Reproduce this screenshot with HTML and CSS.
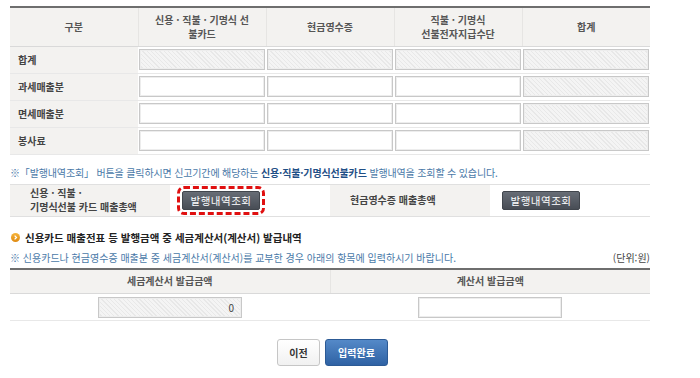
FILE: index.html
```html
<!DOCTYPE html>
<html lang="ko">
<head>
    <meta charset="UTF-8">
    <meta name="viewport" content="width=device-width, initial-scale=1.0">
    <title>신용카드 매출전표 등 발행금액</title>
    <link rel="stylesheet" href="styles.css">
</head>
<body>
    <div class="wrap">
        <table class="grid sales">
            <thead>
                <tr>
                    <th>구분</th>
                    <th>신용 · 직불 · 기명식 선<br>불카드</th>
                    <th>현금영수증</th>
                    <th>직불 · 기명식<br>선불전자지급수단</th>
                    <th>합계</th>
                </tr>
            </thead>
            <tbody>
                <tr>
                    <td class="label">합계</td>
                    <td><input class="field locked" type="text" disabled></td>
                    <td><input class="field locked" type="text" disabled></td>
                    <td><input class="field locked" type="text" disabled></td>
                    <td><input class="field locked" type="text" disabled></td>
                </tr>
                <tr>
                    <td class="label">과세매출분</td>
                    <td><input class="field" type="text"></td>
                    <td><input class="field" type="text"></td>
                    <td><input class="field" type="text"></td>
                    <td><input class="field locked" type="text" disabled></td>
                </tr>
                <tr>
                    <td class="label">면세매출분</td>
                    <td><input class="field" type="text"></td>
                    <td><input class="field" type="text"></td>
                    <td><input class="field" type="text"></td>
                    <td><input class="field locked" type="text" disabled></td>
                </tr>
                <tr>
                    <td class="label">봉사료</td>
                    <td><input class="field" type="text"></td>
                    <td><input class="field" type="text"></td>
                    <td><input class="field" type="text"></td>
                    <td><input class="field locked" type="text" disabled></td>
                </tr>
            </tbody>
        </table>

        <p class="notice">※「발행내역조회」 버튼을 클릭하시면 신고기간에 해당하는 <strong>신용·직불·기명식선불카드</strong> 발행내역을 조회할 수 있습니다.</p>

        <table class="totals">
            <tr>
                <th>신용 · 직불 ·<br>기명식선불 카드 매출총액</th>
                <td><button class="lookup-btn highlight">발행내역조회</button></td>
                <th>현금영수증 매출총액</th>
                <td><button class="lookup-btn">발행내역조회</button></td>
            </tr>
        </table>

        <h3 class="section-title">
            <svg class="bullet" width="9" height="9" viewBox="0 0 9 9">
                <defs>
                    <linearGradient id="orange" x1="0" y1="0" x2="0" y2="1">
                        <stop offset="0" stop-color="#f6b43a"/>
                        <stop offset="1" stop-color="#df8a12"/>
                    </linearGradient>
                </defs>
                <circle cx="4.5" cy="4.5" r="4.5" fill="url(#orange)"/>
                <path d="M3.6 2.6 L5.5 4.5 L3.6 6.4" fill="none" stroke="#fff" stroke-width="1.3"/>
            </svg>
            신용카드 매출전표 등 발행금액 중 세금계산서(계산서) 발급내역
        </h3>

        <div class="sub-row">
            <p class="sub-notice">※ 신용카드나 현금영수증 매출분 중 세금계산서(계산서)를 교부한 경우 아래의 항목에 입력하시기 바랍니다.</p>
            <span class="unit">(단위:원)</span>
        </div>

        <table class="grid invoices">
            <thead>
                <tr>
                    <th>세금계산서 발급금액</th>
                    <th>계산서 발급금액</th>
                </tr>
            </thead>
            <tbody>
                <tr>
                    <td><input class="field short locked" type="text" value="0" disabled></td>
                    <td><input class="field short" type="text"></td>
                </tr>
            </tbody>
        </table>

        <div class="actions">
            <button class="btn btn-prev">이전</button>
            <button class="btn btn-done">입력완료</button>
        </div>
    </div>
</body>
</html>
```

FILE: styles.css
```css
* {
    margin: 0;
    padding: 0;
    box-sizing: border-box;
}

body {
    font-family: "Noto Sans CJK KR", "Noto Sans", sans-serif;
    font-size: 10px;
    color: #333;
    background-color: #ffffff;
}

.wrap {
    width: 640px;
    margin: 6px 0 0 10px;
}

table {
    width: 100%;
    border-collapse: collapse;
    table-layout: fixed;
}

.grid {
    border-top: 2px solid #6e6e6e;
}

.grid th {
    background-color: #f3f2f0;
    color: #555;
    font-weight: bold;
    line-height: 14px;
    border-left: 1px solid #e6e5e3;
    border-bottom: 1px solid #d9d9d9;
}

.grid th:first-child {
    border-left: none;
}

.sales th {
    height: 39px;
}

.sales td {
    height: 27px;
    padding: 0 1px;
    border-bottom: 1px solid #e8e8e8;
}

.sales td.label {
    background-color: #f3f2f0;
    padding-left: 8px;
    color: #444;
    font-weight: bold;
}

.field {
    display: block;
    width: 100%;
    height: 21px;
    border: 1px solid #c8c8c8;
    box-shadow: inset 0 0 0 1px #ededed;
    background-color: #ffffff;
    font: inherit;
    color: #444;
    text-align: right;
    padding: 0 7px;
}

.field.locked {
    background: repeating-linear-gradient(45deg, #f4f4f4 0 2px, #e8e8e8 2px 3px);
}

.notice {
    margin-top: 11px;
    line-height: 14px;
    letter-spacing: -0.15px;
    color: #4a79a8;
}

.notice strong {
    color: #1f4f86;
}

.totals {
    margin-top: 4px;
    border-top: 1px solid #e0e0e0;
    border-bottom: 1px solid #e0e0e0;
}

.totals th {
    height: 32px;
    background-color: #f3f2f0;
    color: #444;
    font-weight: bold;
    text-align: left;
    line-height: 14px;
    padding-left: 20px;
}

.totals td {
    padding-left: 12px;
}

.lookup-btn {
    width: 78px;
    height: 19px;
    border: 1px solid #41464d;
    border-radius: 2px;
    background: linear-gradient(#676d76, #484d55);
    color: #ffffff;
    font: inherit;
    font-size: 10.5px;
    letter-spacing: 0.5px;
    cursor: pointer;
}

.lookup-btn.highlight {
    outline: 3px dashed #e01010;
    outline-offset: 2px;
}

.section-title {
    display: flex;
    align-items: center;
    gap: 5px;
    margin-top: 14px;
    line-height: 14px;
    font-size: 10.5px;
    color: #222;
    font-weight: bold;
}

.bullet {
    margin-left: 1px;
}

.sub-row {
    display: flex;
    justify-content: space-between;
    margin-top: 6px;
    line-height: 14px;
}

.sub-notice {
    color: #4a79a8;
}

.unit {
    color: #444;
}

.invoices {
    margin-top: 3px;
}

.invoices th {
    height: 25px;
}

.invoices td {
    height: 27px;
    border-bottom: 1px solid #e8e8e8;
}

.field.short {
    width: 144px;
    margin: 0 auto;
}

.actions {
    display: flex;
    justify-content: center;
    gap: 5px;
    margin-top: 18px;
    padding-left: 5px;
}

.btn {
    height: 27px;
    border-radius: 3px;
    font: inherit;
    font-weight: bold;
    cursor: pointer;
}

.btn-prev {
    width: 43px;
    border: 1px solid #c6c6c6;
    background: linear-gradient(#ffffff, #f1f1f1);
    color: #333;
}

.btn-done {
    width: 63px;
    border: 1px solid #2c5a95;
    background: linear-gradient(#5489c8, #2f62a4);
    color: #ffffff;
}
```
